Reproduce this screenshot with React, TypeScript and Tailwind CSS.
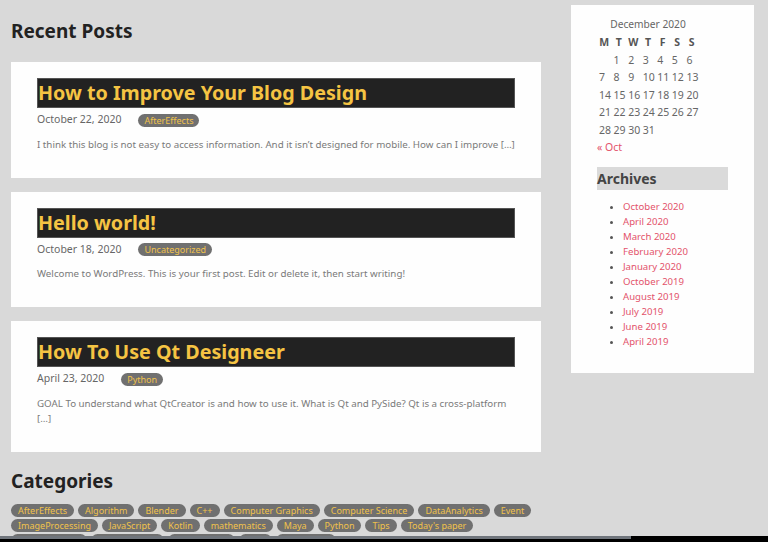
import React from "react";

type Post = {
  title: string;
  date: string;
  tag: string;
  excerpt: string;
};

const posts: Post[] = [
  {
    title: "How to Improve Your Blog Design",
    date: "October 22, 2020",
    tag: "AfterEffects",
    excerpt:
      "I think this blog is not easy to access information. And it isn’t designed for mobile. How can I improve […]",
  },
  {
    title: "Hello world!",
    date: "October 18, 2020",
    tag: "Uncategorized",
    excerpt: "Welcome to WordPress. This is your first post. Edit or delete it, then start writing!",
  },
  {
    title: "How To Use Qt Designeer",
    date: "April 23, 2020",
    tag: "Python",
    excerpt:
      "GOAL To understand what QtCreator is and how to use it. What is Qt and PySide? Qt is a cross-platform […]",
  },
];

const categories = [
  "AfterEffects",
  "Algorithm",
  "Blender",
  "C++",
  "Computer Graphics",
  "Computer Science",
  "DataAnalytics",
  "Event",
  "ImageProcessing",
  "JavaScript",
  "Kotlin",
  "mathematics",
  "Maya",
  "Python",
  "Tips",
  "Today's paper",
  "Uncategorized",
  "Unreal Engine",
  "Visualization",
  "Web",
  "WordPress",
];

const archives = [
  "October 2020",
  "April 2020",
  "March 2020",
  "February 2020",
  "January 2020",
  "October 2019",
  "August 2019",
  "July 2019",
  "June 2019",
  "April 2019",
];

const weekDays = ["M", "T", "W", "T", "F", "S", "S"];
const calendarDays: (number | null)[] = [null, ...Array.from({ length: 31 }, (_, i) => i + 1)];

function PostCard({ post }: { post: Post }) {
  return (
    <article className="bg-[#fefefe] px-[26px] pt-[16px] pb-[26px]">
      <h2 className="h-[30px] bg-[#222222] border border-[#555] flex items-center text-[19.7px] font-bold leading-none text-[#f5c443]">
        {post.title}
      </h2>
      <div className="mt-[5px] h-[14px] flex items-center">
        <span className="text-[10.5px] text-[#666]">{post.date}</span>
        <span className="ml-[17px] h-[13px] px-[6px] rounded-full bg-[#707070] text-[9px] leading-[13px] text-[#f0c24b]">
          {post.tag}
        </span>
      </div>
      <p className="mt-[9.5px] text-[9.75px] leading-[15px] text-[#7a7a7a]">{post.excerpt}</p>
    </article>
  );
}

function Calendar() {
  return (
    <div className="w-[102px]">
      <div className="h-[13px] text-center text-[10.2px] leading-[13px] text-[#666]">December 2020</div>
      <div className="mt-[3px] grid grid-cols-7 text-[10.5px] leading-[17.6px] text-[#666]">
        {weekDays.map((d, i) => (
          <div key={i} className="text-center font-bold text-[#555]">
            {d}
          </div>
        ))}
        {calendarDays.map((d, i) => (
          <div key={i} className="pl-[2px] whitespace-nowrap">
            {d ?? ""}
          </div>
        ))}
      </div>
      <div className="-mt-[1px] text-[10.5px] leading-[17px] text-[#e3536b]">« Oct</div>
    </div>
  );
}

export default function App() {
  return (
    <div
      className="relative w-[768px] h-[542px] overflow-hidden bg-[#d9d9d9] flex"
      style={{ fontFamily: '"Noto Sans", "Liberation Sans", sans-serif' }}
    >
      <main className="ml-[11px] w-[530px] shrink-0">
        <h1 className="mt-[19px] h-[24px] text-[19px] leading-[24px] font-bold text-[#222]">Recent Posts</h1>
        <div className="mt-[19px] flex flex-col gap-[14px]">
          {posts.map((p) => (
            <PostCard key={p.title} post={p} />
          ))}
        </div>
        <h2 className="mt-[17px] h-[24px] text-[19px] leading-[24px] font-bold text-[#222]">Categories</h2>
        <div className="mt-[11px] flex flex-wrap gap-x-[4px] gap-y-[2px]">
          {categories.map((c) => (
            <span
              key={c}
              className="h-[13px] px-[7px] rounded-full bg-[#707070] text-[9px] leading-[13px] text-[#f0c24b]"
            >
              {c}
            </span>
          ))}
        </div>
      </main>

      <aside className="ml-[30px] mt-[5px] w-[183px] h-[368px] shrink-0 bg-[#fefefe] pl-[26px] pt-[13px]">
        <Calendar />
        <h3 className="mt-[11px] w-[131px] h-[23px] bg-[#dadada] text-[14px] leading-[23px] font-bold text-[#444]">
          Archives
        </h3>
        <ul className="mt-[9.5px] pl-[26px] list-disc text-[9.6px] leading-[15px] text-[#e3536b] marker:text-[#555]">
          {archives.map((a) => (
            <li key={a}>{a}</li>
          ))}
        </ul>
      </aside>

      {/* horizontal scrollbar along the window bottom */}
      <div className="absolute left-0 bottom-0 w-full h-[6px] bg-black">
        <div className="w-[631px] h-[2.5px] bg-[#70757c]" />
      </div>
    </div>
  );
}
